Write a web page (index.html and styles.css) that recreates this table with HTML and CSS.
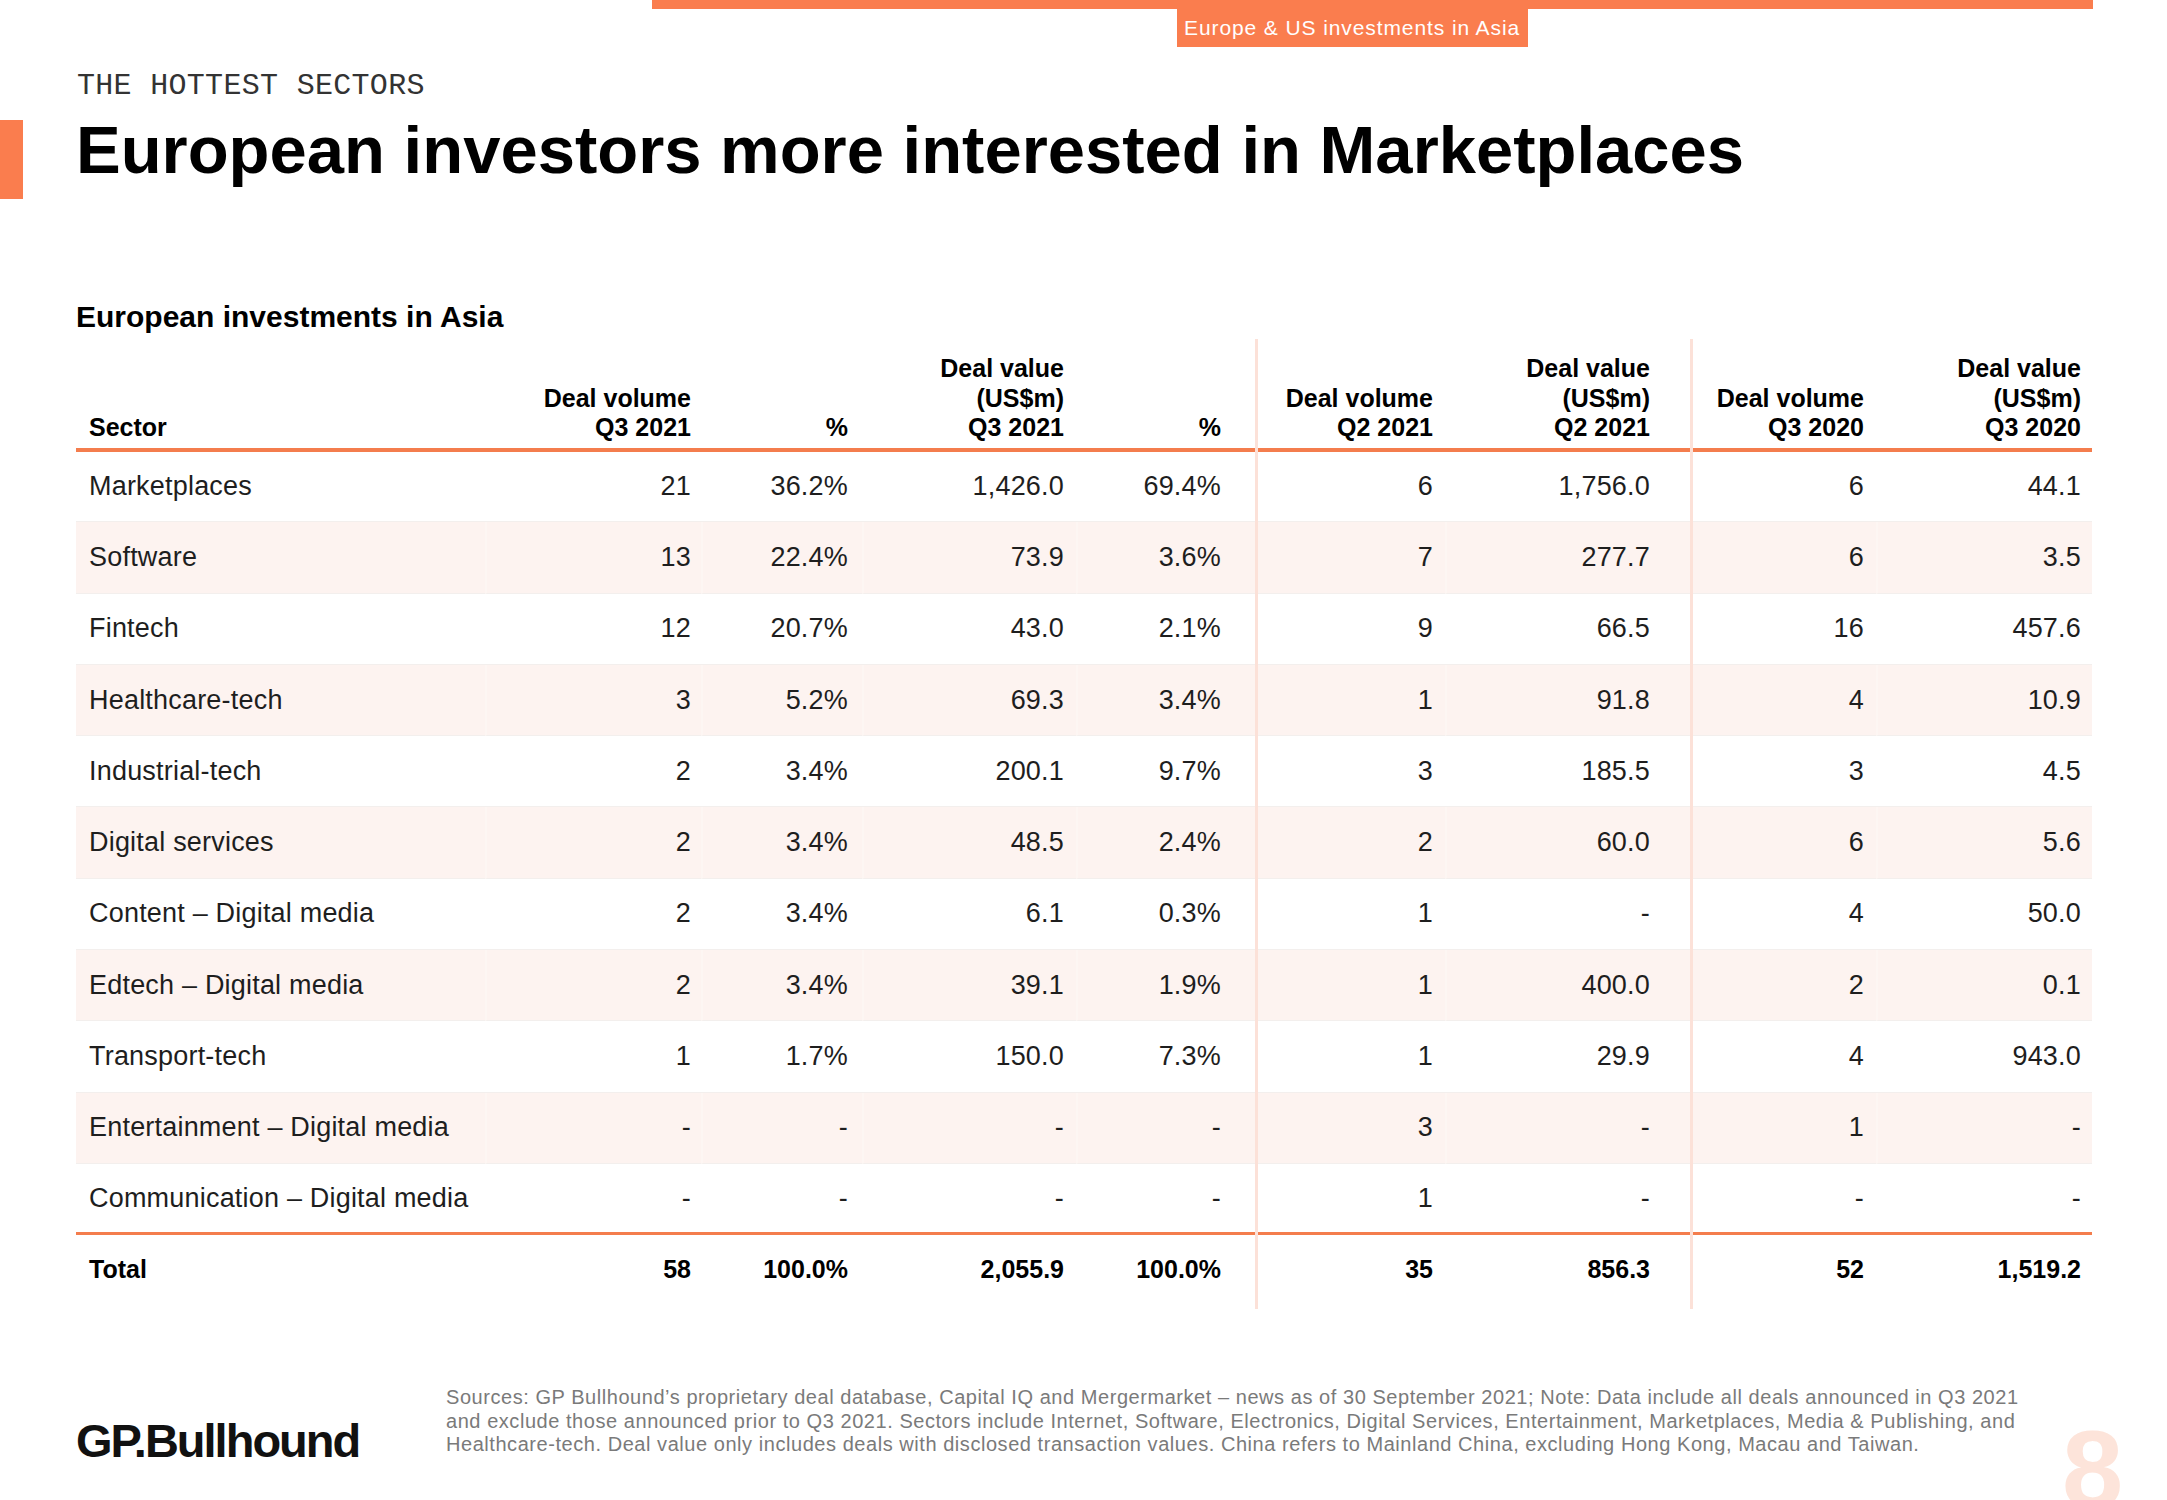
FILE: index.html
```html
<!DOCTYPE html>
<html lang="en">
<head>
<meta charset="utf-8">
<title>European investors more interested in Marketplaces</title>
<link rel="stylesheet" href="styles.css">
</head>
<body>
<div class="page">
  <header class="masthead">
    <div class="topbar"></div>
    <div class="tag">Europe &amp; US investments in Asia</div>
  </header>

  <div class="kicker">THE HOTTEST SECTORS</div>
  <div class="title-row">
    <div class="marker"></div>
    <h1 class="title">European investors more interested in Marketplaces</h1>
  </div>

  <h2 class="subtitle">European investments in Asia</h2>

  <div class="table">
    <div class="row head">
      <div class="c sector">Sector</div>
      <div class="c p2">Deal volume<br>Q3 2021</div>
      <div class="c p3">%</div>
      <div class="c p4">Deal value<br>(US$m)<br>Q3 2021</div>
      <div class="c p5">%</div>
      <div class="sep"></div>
      <div class="c p6">Deal volume<br>Q2 2021</div>
      <div class="c p7">Deal value<br>(US$m)<br>Q2 2021</div>
      <div class="sep"></div>
      <div class="c p8">Deal volume<br>Q3 2020</div>
      <div class="c p9">Deal value<br>(US$m)<br>Q3 2020</div>
    </div>

    <div class="row">
      <div class="c sector">Marketplaces</div>
      <div class="c p2">21</div><div class="c p3">36.2%</div><div class="c p4">1,426.0</div><div class="c p5">69.4%</div>
      <div class="sep"></div>
      <div class="c p6">6</div><div class="c p7">1,756.0</div>
      <div class="sep"></div>
      <div class="c p8">6</div><div class="c p9">44.1</div>
    </div>
    <div class="row alt">
      <div class="c sector">Software</div>
      <div class="c p2">13</div><div class="c p3">22.4%</div><div class="c p4">73.9</div><div class="c p5">3.6%</div>
      <div class="sep"></div>
      <div class="c p6">7</div><div class="c p7">277.7</div>
      <div class="sep"></div>
      <div class="c p8">6</div><div class="c p9">3.5</div>
    </div>
    <div class="row">
      <div class="c sector">Fintech</div>
      <div class="c p2">12</div><div class="c p3">20.7%</div><div class="c p4">43.0</div><div class="c p5">2.1%</div>
      <div class="sep"></div>
      <div class="c p6">9</div><div class="c p7">66.5</div>
      <div class="sep"></div>
      <div class="c p8">16</div><div class="c p9">457.6</div>
    </div>
    <div class="row alt">
      <div class="c sector">Healthcare-tech</div>
      <div class="c p2">3</div><div class="c p3">5.2%</div><div class="c p4">69.3</div><div class="c p5">3.4%</div>
      <div class="sep"></div>
      <div class="c p6">1</div><div class="c p7">91.8</div>
      <div class="sep"></div>
      <div class="c p8">4</div><div class="c p9">10.9</div>
    </div>
    <div class="row">
      <div class="c sector">Industrial-tech</div>
      <div class="c p2">2</div><div class="c p3">3.4%</div><div class="c p4">200.1</div><div class="c p5">9.7%</div>
      <div class="sep"></div>
      <div class="c p6">3</div><div class="c p7">185.5</div>
      <div class="sep"></div>
      <div class="c p8">3</div><div class="c p9">4.5</div>
    </div>
    <div class="row alt">
      <div class="c sector">Digital services</div>
      <div class="c p2">2</div><div class="c p3">3.4%</div><div class="c p4">48.5</div><div class="c p5">2.4%</div>
      <div class="sep"></div>
      <div class="c p6">2</div><div class="c p7">60.0</div>
      <div class="sep"></div>
      <div class="c p8">6</div><div class="c p9">5.6</div>
    </div>
    <div class="row">
      <div class="c sector">Content – Digital media</div>
      <div class="c p2">2</div><div class="c p3">3.4%</div><div class="c p4">6.1</div><div class="c p5">0.3%</div>
      <div class="sep"></div>
      <div class="c p6">1</div><div class="c p7">-</div>
      <div class="sep"></div>
      <div class="c p8">4</div><div class="c p9">50.0</div>
    </div>
    <div class="row alt">
      <div class="c sector">Edtech – Digital media</div>
      <div class="c p2">2</div><div class="c p3">3.4%</div><div class="c p4">39.1</div><div class="c p5">1.9%</div>
      <div class="sep"></div>
      <div class="c p6">1</div><div class="c p7">400.0</div>
      <div class="sep"></div>
      <div class="c p8">2</div><div class="c p9">0.1</div>
    </div>
    <div class="row">
      <div class="c sector">Transport-tech</div>
      <div class="c p2">1</div><div class="c p3">1.7%</div><div class="c p4">150.0</div><div class="c p5">7.3%</div>
      <div class="sep"></div>
      <div class="c p6">1</div><div class="c p7">29.9</div>
      <div class="sep"></div>
      <div class="c p8">4</div><div class="c p9">943.0</div>
    </div>
    <div class="row alt">
      <div class="c sector">Entertainment – Digital media</div>
      <div class="c p2">-</div><div class="c p3">-</div><div class="c p4">-</div><div class="c p5">-</div>
      <div class="sep"></div>
      <div class="c p6">3</div><div class="c p7">-</div>
      <div class="sep"></div>
      <div class="c p8">1</div><div class="c p9">-</div>
    </div>
    <div class="row last">
      <div class="c sector">Communication – Digital media</div>
      <div class="c p2">-</div><div class="c p3">-</div><div class="c p4">-</div><div class="c p5">-</div>
      <div class="sep"></div>
      <div class="c p6">1</div><div class="c p7">-</div>
      <div class="sep"></div>
      <div class="c p8">-</div><div class="c p9">-</div>
    </div>
    <div class="row total">
      <div class="c sector">Total</div>
      <div class="c p2">58</div><div class="c p3">100.0%</div><div class="c p4">2,055.9</div><div class="c p5">100.0%</div>
      <div class="sep"></div>
      <div class="c p6">35</div><div class="c p7">856.3</div>
      <div class="sep"></div>
      <div class="c p8">52</div><div class="c p9">1,519.2</div>
    </div>
  </div>

  <footer class="footer">
    <div class="logo">GP.Bullhound</div>
    <p class="note">Sources: GP Bullhound’s proprietary deal database, Capital IQ and Mergermarket – news as of 30 September 2021; Note: Data include all deals announced in Q3 2021<br>and exclude those announced prior to Q3 2021. Sectors include Internet, Software, Electronics, Digital Services, Entertainment, Marketplaces, Media &amp; Publishing, and<br>Healthcare-tech. Deal value only includes deals with disclosed transaction values. China refers to Mainland China, excluding Hong Kong, Macau and Taiwan.</p>
  </footer>

  <div class="pagenum">8</div>
</div>
</body>
</html>
```

FILE: styles.css
```css
html, body {
  margin: 0;
  padding: 0;
  background: #ffffff;
}

.page {
  position: relative;
  width: 2167px;
  height: 1500px;
  overflow: hidden;
  font-family: "Liberation Sans", Arial, sans-serif;
  color: #1e1e1e;
}

/* ---------- masthead ---------- */
.masthead {
  display: flex;
  flex-direction: column;
}

.topbar {
  margin-left: 652px;
  width: 1441px;
  height: 9px;
  background: #fa7d4e;
}

.tag {
  margin-left: 1177px;
  width: 351px;
  height: 38px;
  box-sizing: border-box;
  padding-left: 7px;
  background: #fa7d4e;
  color: #ffffff;
  font-size: 21px;
  line-height: 38px;
  letter-spacing: 0.9px;
  white-space: nowrap;
}

/* ---------- titles ---------- */
.kicker {
  margin: 21px 0 0 77px;
  font-family: "Liberation Mono", "Courier New", monospace;
  font-size: 30px;
  line-height: 36px;
  color: #333333;
  letter-spacing: 0.3px;
}

.title-row {
  display: flex;
  align-items: flex-start;
  gap: 53px;
  margin-top: 6px;
}

.marker {
  width: 23px;
  height: 79px;
  margin-top: 10px;
  background: #fa7d4e;
  flex: none;
}

.title {
  margin: 0;
  font-size: 67px;
  line-height: 80px;
  font-weight: 700;
  color: #000000;
  white-space: nowrap;
}

.subtitle {
  margin: 101px 0 0 76px;
  font-size: 30px;
  line-height: 34px;
  font-weight: 700;
  color: #000000;
}

/* ---------- table ---------- */
.table {
  margin: 5px 0 0 76px;
  width: 2016px;
}

.row {
  display: grid;
  grid-template-columns: 409px 216px 161px 214px 179px 3px 187px 245px 3px 183px 216px;
  height: 71.3px;
  font-size: 27px;
  letter-spacing: 0.2px;
}

.row .c {
  display: flex;
  align-items: center;
  justify-content: flex-end;
  text-align: right;
  white-space: nowrap;
  box-sizing: border-box;
  border-bottom: 1px solid #f3efed;
}

.row .sector {
  justify-content: flex-start;
  text-align: left;
  padding-left: 13px;
}

.p2 { padding-right: 10px; }
.p3 { padding-right: 14px; }
.p4 { padding-right: 12px; }
.p5 { padding-right: 34px; }
.p6 { padding-right: 12px; }
.p7 { padding-right: 40px; }
.p8 { padding-right: 12px; }
.p9 { padding-right: 11px; }

.sep {
  background: #fce1d8;
}

.row.alt .c {
  background: #fdf3f0;
}

.row.alt .c + .c {
  border-left: 2px solid #fdf6f3;
}

.row.head {
  height: 112px;
  font-size: 25px;
  font-weight: 700;
  letter-spacing: 0;
  color: #000000;
}

.row.head .c {
  align-items: flex-end;
  line-height: 29.5px;
  padding-top: 15px;
  padding-bottom: 5px;
  border-bottom: 4px solid #f47d4d;
}

.row.last .c {
  border-bottom: 3px solid #f47d4d;
}

.row.total {
  height: 74px;
  font-size: 25px;
  font-weight: 700;
  letter-spacing: 0;
  color: #000000;
}

.row.total .c {
  border-bottom: none;
  padding-bottom: 6px;
}

/* ---------- footer ---------- */
.footer {
  display: flex;
  align-items: flex-start;
  margin-top: 77px;
  padding-left: 76px;
}

.logo {
  width: 370px;
  flex: none;
  margin-top: 30px;
  font-size: 47px;
  line-height: 50px;
  font-weight: 700;
  letter-spacing: -2px;
  color: #111111;
}

.note {
  margin: 0;
  font-size: 20px;
  line-height: 23.5px;
  letter-spacing: 0.55px;
  color: #7a7a7a;
  white-space: nowrap;
}

.pagenum {
  position: absolute;
  left: 2062px;
  top: 1414px;
  font-size: 110px;
  line-height: 1;
  font-weight: 700;
  color: #fde4da;
}
```
